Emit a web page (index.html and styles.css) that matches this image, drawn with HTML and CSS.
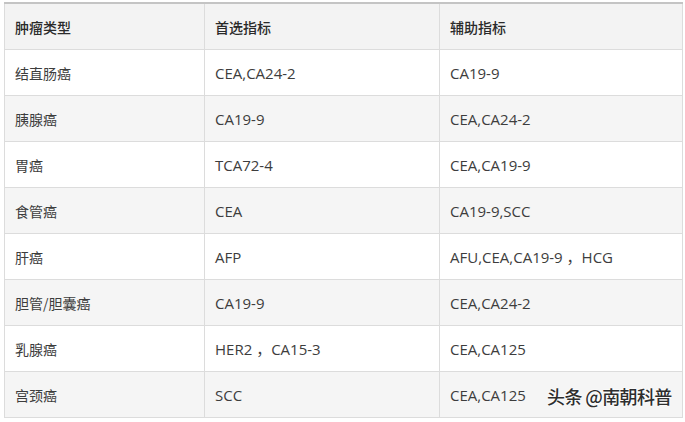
FILE: index.html
```html
<!DOCTYPE html>
<html lang="zh">
<head>
<meta charset="utf-8">
<link rel="stylesheet" href="styles.css">
</head>
<body>
<div class="wrap">
<table class="tbl">
  <colgroup><col class="c1"><col class="c2"><col class="c3"></colgroup>
  <thead>
    <tr><th>肿瘤类型</th><th>首选指标</th><th>辅助指标</th></tr>
  </thead>
  <tbody>
    <tr><td>结直肠癌</td><td>CEA,CA24-2</td><td>CA19-9</td></tr>
    <tr><td>胰腺癌</td><td>CA19-9</td><td>CEA,CA24-2</td></tr>
    <tr><td>胃癌</td><td>TCA72-4</td><td>CEA,CA19-9</td></tr>
    <tr><td>食管癌</td><td>CEA</td><td>CA19-9,SCC</td></tr>
    <tr><td>肝癌</td><td>AFP</td><td>AFU,CEA,CA19-9 ，HCG</td></tr>
    <tr><td>胆管/胆囊癌</td><td>CA19-9</td><td>CEA,CA24-2</td></tr>
    <tr><td>乳腺癌</td><td>HER2 ，CA15-3</td><td>CEA,CA125</td></tr>
    <tr><td>宫颈癌</td><td>SCC</td><td>CEA,CA125</td></tr>
  </tbody>
</table>
<div class="mark">头条 @南朝科普</div>
</div>
</body>
</html>
```
FILE: styles.css
```css
html, body {
  margin: 0;
  padding: 0;
  background: #ffffff;
}
.wrap {
  position: relative;
  width: 685px;
  height: 422px;
  padding: 2px 0 0 4px;
  box-sizing: border-box;
}
.tbl {
  border-collapse: collapse;
  table-layout: fixed;
  width: 678px;
  font-family: "Open Sans", "Noto Sans CJK SC", sans-serif;
  font-size: 15px;
  color: #3d3d3d;
  border-top: 2px solid #c4c4c4;
}
.c1 { width: 200px; }
.c2 { width: 235px; }
.c3 { width: 243px; }
.tbl th, .tbl td {
  border: 1px solid #dcdcdc;
  height: 45px;
  padding: 0 10px;
  text-align: left;
  vertical-align: middle;
  white-space: nowrap;
}
.tbl th {
  font-weight: 500;
  font-size: 14px;
  color: #2a2a2a;
  background: #f3f3f3;
  font-family: "Noto Sans CJK SC", sans-serif;
}
.tbl tr:first-child th { border-top: none; }
.tbl tbody tr:nth-child(even) td { background: #f5f5f5; }
.tbl tbody td:first-child {
  font-family: "Noto Sans CJK SC", sans-serif;
  font-size: 14px;
}
.mark {
  position: absolute;
  left: 547px;
  top: 383px;
  font-family: "Noto Sans CJK SC", sans-serif;
  font-size: 18px;
  font-weight: 500;
  color: #2e2e2e;
  text-shadow: 0 0 2px #fff, 0 0 2px #fff, 0 0 2px #fff;
  letter-spacing: -0.6px;
}
```
